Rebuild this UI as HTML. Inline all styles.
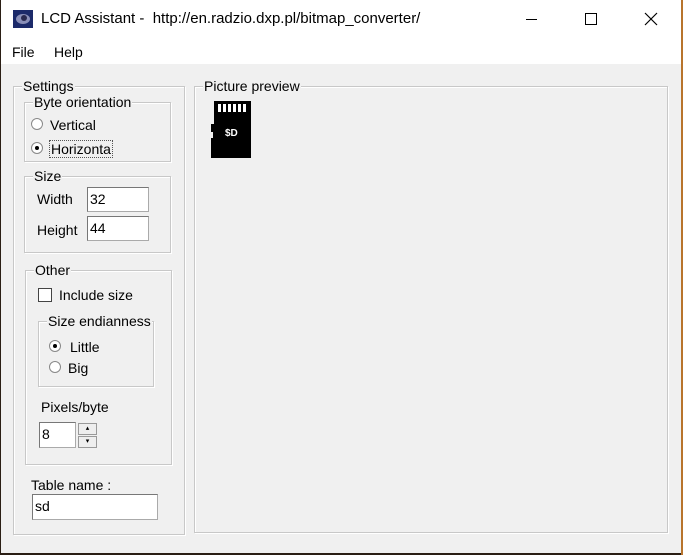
<!DOCTYPE html>
<html><head><style>
*{margin:0;padding:0;box-sizing:border-box}
body{width:683px;height:555px;overflow:hidden;background:#2a1e14;font-family:"Liberation Sans",sans-serif;font-size:14px;color:#000;position:relative}
.win{position:absolute;left:1px;top:0;width:680px;height:553px;background:#f0f0f0}
.a{position:absolute}
.gb{position:absolute;border:1px solid #c8c8c8;box-shadow:inset 1px 1px 0 #fff,1px 1px 0 #fff}
.lg{position:absolute;background:#f0f0f0;padding:0 1px;line-height:14px;top:-8px;left:8px;font-size:14px}
.inp{position:absolute;background:#fff;border:1px solid #aaa;border-top-color:#777;border-left-color:#777;font-size:14px;line-height:22px;padding-left:2px}
.rad{position:absolute;width:12px;height:12px;border-radius:50%;border:1px solid #888;background:#fff}
.rad.on::after{content:"";position:absolute;left:3px;top:3px;width:4px;height:4px;border-radius:50%;background:#000}
</style></head><body>
<div class="win">
<div class="a" style="left:0;top:0;width:680px;height:64px;background:#fff"></div>
<svg class="a" style="left:12px;top:10px" width="20" height="18"><rect width="20" height="18" fill="#1c2a6a"/><ellipse cx="10" cy="9" rx="7" ry="5" fill="#8a8fb8"/><circle cx="11" cy="8" r="3" fill="#2a2a50"/></svg>
<div class="a" style="left:40px;top:10px;font-size:15px">LCD Assistant -&nbsp; http://en.radzio.dxp.pl/bitmap_converter/</div>
<div class="a" style="left:525px;top:19px;width:11px;height:1px;background:#000"></div>
<div class="a" style="left:584px;top:13px;width:12px;height:12px;border:1px solid #000"></div>
<svg class="a" style="left:643px;top:12px" width="14" height="14"><path d="M1 1L13 13M13 1L1 13" stroke="#000" stroke-width="1.2"/></svg>
<div class="a" style="left:11px;top:44px">File</div>
<div class="a" style="left:53px;top:44px">Help</div>

<div class="gb" style="left:12px;top:86px;width:172px;height:449px"><div class="lg" style="left:8px">Settings</div></div>
<div class="gb" style="left:193px;top:86px;width:474px;height:447px"><div class="lg" style="left:8px">Picture preview</div></div>

<div class="gb" style="left:23px;top:102px;width:147px;height:60px"><div class="lg" style="left:8px">Byte orientation</div></div>
<div class="rad" style="left:30px;top:118px"></div><div class="a" style="left:49px;top:117px">Vertical</div>
<div class="rad on" style="left:30px;top:142px"></div><div class="a" style="left:48px;top:140px;border:1px dotted #555;padding:0 1px">Horizonta</div>

<div class="gb" style="left:23px;top:176px;width:147px;height:77px"><div class="lg" style="left:8px">Size</div></div>
<div class="a" style="left:36px;top:191px">Width</div>
<div class="inp" style="left:86px;top:187px;width:62px;height:25px">32</div>
<div class="a" style="left:36px;top:222px">Height</div>
<div class="inp" style="left:86px;top:216px;width:62px;height:25px">44</div>

<div class="gb" style="left:24px;top:270px;width:147px;height:195px"><div class="lg" style="left:8px">Other</div></div>
<div class="a" style="left:37px;top:288px;width:14px;height:14px;border:1px solid #444;background:#fff"></div>
<div class="a" style="left:58px;top:287px">Include size</div>
<div class="gb" style="left:37px;top:321px;width:116px;height:66px"><div class="lg" style="left:8px">Size endianness</div></div>
<div class="rad on" style="left:48px;top:340px"></div><div class="a" style="left:69px;top:339px">Little</div>
<div class="rad" style="left:48px;top:361px"></div><div class="a" style="left:67px;top:360px">Big</div>
<div class="a" style="left:40px;top:399px">Pixels/byte</div>
<div class="inp" style="left:38px;top:422px;width:37px;height:26px">8</div>
<div class="a" style="left:77px;top:423px;width:19px;height:12px;border:1px solid #999;background:#eee;font-size:7px;text-align:center;line-height:9px">▴</div>
<div class="a" style="left:77px;top:436px;width:19px;height:12px;border:1px solid #999;background:#eee;font-size:7px;text-align:center;line-height:9px">▾</div>

<div class="a" style="left:30px;top:477px">Table name :</div>
<div class="inp" style="left:31px;top:494px;width:126px;height:26px">sd</div>

<svg class="a" style="left:209px;top:101px" width="42" height="57"><path d="M4 0H41V57H1V37H3V31H1V23H4Z" fill="#000"/>
<g fill="#fff"><rect x="8" y="3" width="3" height="8"/><rect x="13" y="3" width="3" height="8"/><rect x="18" y="3" width="3" height="8"/><rect x="23" y="3" width="3" height="8"/><rect x="28" y="3" width="3" height="8"/><rect x="33" y="3" width="3" height="8"/></g>
<text x="15" y="35" fill="#fff" font-family="Liberation Sans" font-weight="bold" font-size="10">$D</text></svg>
</div>
<div class="a" style="left:681px;top:0;width:2px;height:555px;background:#b8742c"></div>
</body></html>
